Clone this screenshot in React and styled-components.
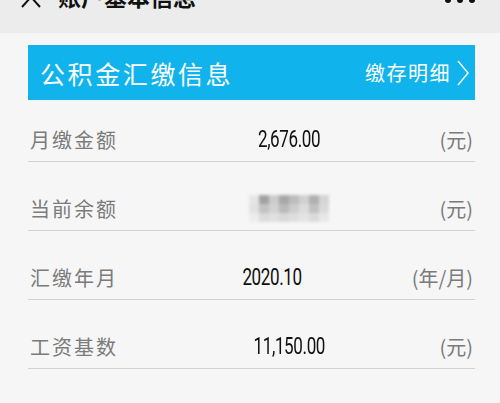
import styled, { createGlobalStyle } from "styled-components";

const GlobalStyle = createGlobalStyle`
  html, body {
    margin: 0;
    padding: 0;
    background: #f6f6f6;
    font-family: "Noto Sans CJK SC", "Noto Sans", sans-serif;
  }
  #root {
    width: 500px;
    height: 403px;
    overflow: hidden;
  }
`;

// page-container
const Page = styled.div`
  width: 500px;
  height: 403px;
  overflow: hidden;
  background: #f6f6f6;
`;

// top-nav-bar
const NavBar = styled.div`
  height: 33px;
  background: #ececec;
  display: flex;
  align-items: flex-start;
  padding: 0 25px 0 20px;
  overflow: hidden;
  .nav-back {
    margin-top: -9px;
    width: 22px;
    height: 18px;
  }
  .nav-title {
    margin-top: -19px;
    margin-left: 16px;
    font-size: 23px;
    line-height: 30px;
    font-weight: 700;
    color: #111;
    flex: 1;
  }
  .nav-more {
    margin-top: -3px;
    display: flex;
    gap: 6px;
  }
`;

const Dot = styled.span`
  width: 6px;
  height: 6px;
  border-radius: 50%;
  background: #111;
`;

// content-section
const Content = styled.div`
  padding: 12px 25px 0 28px;
`;

// blue-banner
const Banner = styled.div`
  height: 55px;
  background: #10b3ec;
  display: flex;
  align-items: center;
  justify-content: space-between;
  padding: 0 6px 0 12px;
  color: #fff;
  margin-bottom: 17px;
  .banner-title {
    font-size: 25px;
    letter-spacing: 2.6px;
  }
  .banner-link {
    display: flex;
    align-items: center;
    gap: 6px;
    font-size: 20px;
    letter-spacing: 1.5px;
  }
`;

// info-row
const InfoRow = styled.div`
  height: 44px;
  display: grid;
  grid-template-columns: 181px 160px 1fr;
  align-items: center;
  border-bottom: 1px solid #d2d2d2;
  margin-bottom: 24px;
  .row-label {
    font-size: 20px;
    color: #7b7b7b;
    letter-spacing: 2px;
    padding-left: 2px;
  }
  .row-unit {
    justify-self: end;
    font-size: 20px;
    color: #7b7b7b;
    padding-right: 2px;
  }
`;

const Value = styled.span`
  justify-self: center;
  font-family: Roboto, "Liberation Sans", sans-serif;
  font-size: 23px;
  color: #111;
  letter-spacing: -0.5px;
  transform: translateX(${(p) => p.$shift || 0}px) scaleX(0.74);
`;

// blurred-mosaic
const Mosaic = styled.div`
  justify-self: center;
  display: grid;
  grid-template-columns: repeat(8, 10px);
  grid-template-rows: repeat(3, 9px);
  filter: blur(1.5px);
  opacity: 0.9;
`;

const Cell = styled.span`
  background: ${(p) => p.$c};
`;

const mosaicColors = [
  "#e4e4e4", "#9a9a9a", "#c8c8c8", "#a0a0a0", "#b6b6b6", "#cdcdcd", "#a9a9a9", "#d2d2d2",
  "#e0e0e0", "#bdbdbd", "#cfcfcf", "#b4b4b4", "#c9c9c9", "#dadada", "#bcbcbc", "#d8d8d8",
  "#ebebeb", "#d9d9d9", "#dedede", "#d6d6d6", "#dcdcdc", "#e2e2e2", "#d8d8d8", "#e6e6e6",
];

const rows = [
  { label: "月缴金额", value: "2,676.00", unit: "(元)" },
  { label: "当前余额", hidden: true, unit: "(元)" },
  { label: "汇缴年月", value: "2020.10", unit: "(年/月)", shift: -17 },
  { label: "工资基数", value: "11,150.00", unit: "(元)" },
  { label: "缴存比例", value: "12%", unit: "(%)" },
];

export default function App() {
  return (
    <Page>
      <GlobalStyle />
      <NavBar>
        <svg className="nav-back" viewBox="0 0 22 18">
          <path d="M2 16 L11 6 L20 16" fill="none" stroke="#111" strokeWidth="2" />
        </svg>
        <span className="nav-title">账户基本信息</span>
        <span className="nav-more">
          <Dot />
          <Dot />
          <Dot />
        </span>
      </NavBar>
      <Content>
        <Banner>
          <span className="banner-title">公积金汇缴信息</span>
          <span className="banner-link">
            缴存明细
            <svg width="12" height="26" viewBox="0 0 12 26">
              <path d="M1 1 L11 13 L1 25" fill="none" stroke="#fff" strokeWidth="1.4" />
            </svg>
          </span>
        </Banner>
        {rows.map((r) => (
          <InfoRow key={r.label}>
            <span className="row-label">{r.label}</span>
            {r.hidden ? (
              <Mosaic>
                {mosaicColors.map((c, i) => (
                  <Cell key={i} $c={c} />
                ))}
              </Mosaic>
            ) : (
              <Value $shift={r.shift}>{r.value}</Value>
            )}
            <span className="row-unit">{r.unit}</span>
          </InfoRow>
        ))}
      </Content>
    </Page>
  );
}
